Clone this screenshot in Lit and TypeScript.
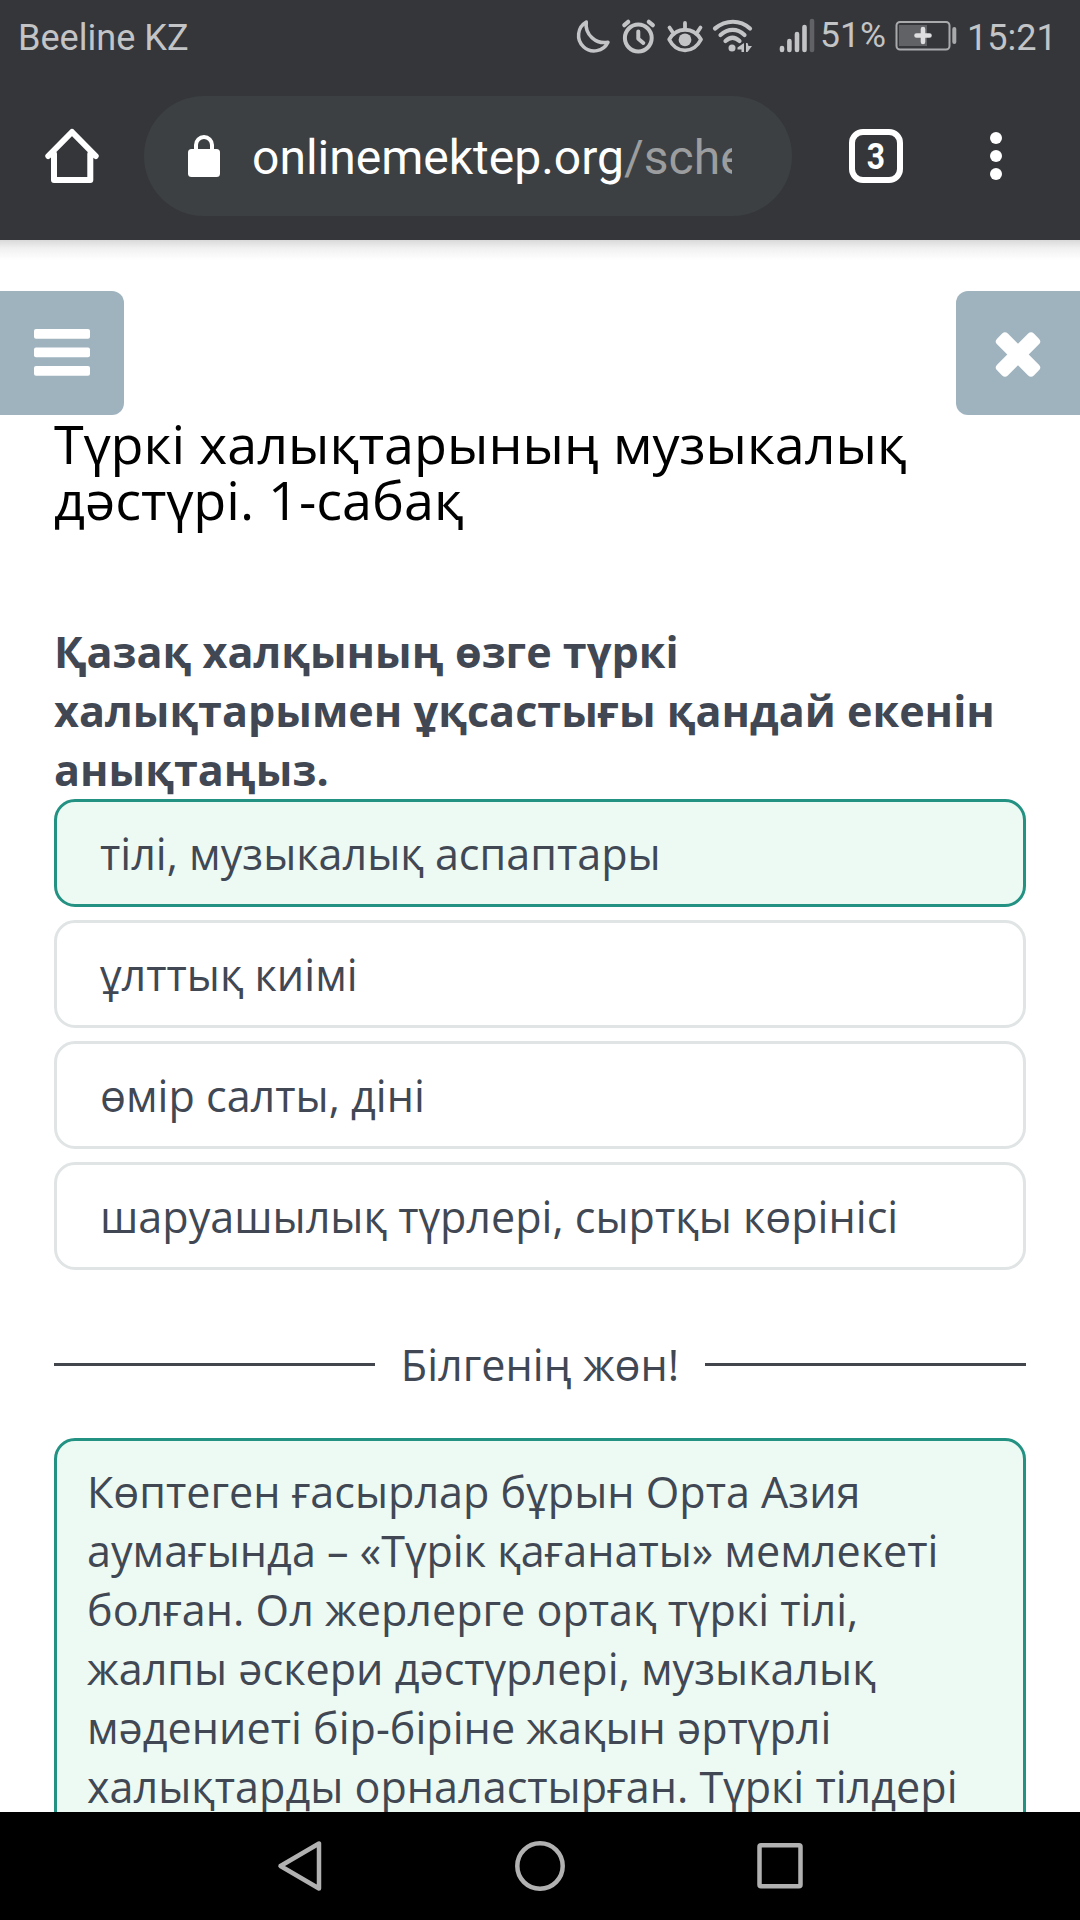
import { LitElement, html, css, svg } from "lit";
import { customElement, property } from "lit/decorators.js";
import { classMap } from "lit/directives/class-map.js";

@customElement("status-bar")
class StatusBar extends LitElement {
  static styles = css`
    :host { display: flex; justify-content: space-between; height: 76px; padding: 0 28px 0 18px; color: #c3c4c6; font: 36.100px/76px Roboto, sans-serif; }
    .carrier { white-space: nowrap; }
    .right { display: flex; }
    .icons { display: block; width: 245px; height: 76px; }
    .battery { display: block; width: 62px; height: 76px; margin: 0 10px 0 10px; }
    .percent { width: 65px; line-height: 70px; font-size: 35.500px; white-space: nowrap; }
    .time { width: 85px; white-space: nowrap; }
  `;
  render() {
    return html`
      <span class="carrier">Beeline KZ</span>
      <div class="right">
        <svg class="icons" viewBox="575 0 245 76" fill="none" stroke="#c3c4c6" stroke-linecap="round" stroke-linejoin="round">
          <path stroke-width="3.5" d="M586.300 22A15.500 15.500 0 1 0 608 42.200C596.500 44.500 584.500 35 586.300 22Z" />
          <g stroke-width="4">
            <circle cx="638.300" cy="38" r="13.400" />
            <path d="M638.300 31.500V38.800L643.300 43" />
            <path stroke-width="4.200" d="M624.300 25.200L628.200 21.800M652.800 25.200L648.800 21.800" />
          </g>
          <g stroke-width="3.8">
            <path d="M669.200 39.500C676.500 26.500 693.500 26.500 701 39.500C693.500 54 676.500 54 669.200 39.500Z" />
            <path d="M685 23V28M669.500 27.500L672.500 32M700.500 27.500L697.500 32" />
            <circle cx="685" cy="39.800" r="6.400" fill="#c3c4c6" stroke="none" />
          </g>
          <g stroke-width="4.200">
            <path d="M715 28.500C726 19.500 740 19.500 750 28.500M720.500 35C728 28.300 737.500 28.300 744.500 35M725.500 41C730 36.800 735 36.800 739.500 41" />
            <circle cx="732" cy="48" r="3.500" fill="#c3c4c6" stroke="none" />
          </g>
          <path fill="#c3c4c6" stroke="none" d="M744 43V52H741.500V49.500H737.500V47.500ZM746 43H747.500L748.500 46L752 46L747.500 52H746Z" />
          <g stroke-width="4.600">
            <path d="M782 48V50M789.400 41V50M797 34V50M804.500 27V50" />
            <path stroke="#616265" d="M812 21V50" />
          </g>
        </svg>
        <span class="percent">51%</span>
        <svg class="battery" viewBox="895 0 62 76">
          <rect x="896.500" y="22" width="53" height="27.500" rx="3.500" fill="none" stroke="#a9aaac" stroke-width="2" />
          <rect x="899" y="25" width="28" height="21" fill="#616265" />
          <path d="M923 29V42M916.500 35.500H929.500" stroke="#dedee0" stroke-width="4.600" stroke-linecap="round" />
          <rect x="952.300" y="27" width="4" height="17" rx="2" fill="#a9aaac" />
        </svg>
        <span class="time">15:21</span>
      </div>
    `;
  }
}

@customElement("address-bar")
class AddressBar extends LitElement {
  static styles = css`
    :host { display: flex; align-items: center; height: 120px; padding: 20px 0 24px; }
    .home { display: block; width: 56px; height: 56px; margin: 0 44px; }
    .pill { box-sizing: border-box; display: flex; align-items: center; width: 648px; height: 120px; padding: 0 60px 0 42px; border-radius: 60px; background: #3d4042; }
    .lock { flex: none; display: block; width: 36px; height: 46px; margin-right: 30px; }
    .url { flex: 1; overflow: hidden; white-space: nowrap; font: 48px/62px Roboto, sans-serif; color: #fff; margin-top: 4px; }
    .path { color: #9b9d9f; }
    .tabs { box-sizing: border-box; width: 54px; height: 54px; margin-left: 57px; border: 6px solid #fff; border-radius: 14px; color: #fff; font: 700 37px/43px Roboto, sans-serif; text-align: center; }
    .count { display: block; transform: scaleX(0.86); }
    .more { display: block; width: 12px; height: 50px; margin-left: 87px; }
  `;
  render() {
    return html`
      <svg class="home" viewBox="44 128 56 56" fill="none" stroke="#fff" stroke-width="6" stroke-linecap="round" stroke-linejoin="round">
        <path d="M48.300 156L72 132L95.700 156M54 154V180H90.300V154" />
      </svg>
      <div class="pill">
        <svg class="lock" viewBox="186 132 36 46">
          <rect x="188" y="148" width="32" height="28" rx="3.500" fill="#fff" />
          <path d="M196 149V144A8 8 0 0 1 212 144V149" fill="none" stroke="#fff" stroke-width="4" />
        </svg>
        <div class="url">onlinemektep.org<span class="path">/schedule</span></div>
      </div>
      <div class="tabs"><span class="count">3</span></div>
      <svg class="more" viewBox="0 0 12 50" fill="#fff">
        ${[7, 25, 43].map((y) => svg`<circle cx="6" cy=${y} r="6" />`)}
      </svg>
    `;
  }
}

@customElement("answer-option")
class AnswerOption extends LitElement {
  @property({ type: Boolean }) selected = false;
  static styles = css`
    :host { display: block; }
    .option { box-sizing: border-box; height: 108px; padding: 21.700px 43px 0; border: 3px solid #e0e4e5; border-radius: 21px; background: #fff; }
    .selected { border-color: #239283; background: #edfaf4; }
  `;
  render() {
    return html`<div class=${classMap({ option: true, selected: this.selected })}><slot></slot></div>`;
  }
}

@customElement("app-root")
class AppRoot extends LitElement {
  static styles = css`
    :host { display: flex; flex-direction: column; width: 1080px; height: 1920px; overflow: hidden; background: #fff; font-family: "Open Sans", "Noto Sans", sans-serif; }
    .chrome { flex: none; height: 240px; background: #35363a; }
    .page { flex: 1; min-height: 0; overflow: hidden; background: linear-gradient(#d9d9d9, #f0f0f0 8px, #fff 20px) no-repeat 0 0 / 100% 20px, #fff; }
    .tools { display: flex; justify-content: space-between; padding-top: 51px; height: 124px; }
    .tool { display: flex; align-items: center; justify-content: center; width: 124px; height: 124px; background: #9fb3bf; }
    .menu { border-radius: 0 12px 12px 0; }
    .close { border-radius: 12px 0 0 12px; }
    .tool svg { display: block; width: 124px; height: 124px; }
    .body { padding: 0 54px; color: #414853; font-size: 43.120px; line-height: 59.060px; }
    .title { margin: 0 0 95px; color: #000; font-weight: 400; font-size: 53.900px; line-height: 56px; }
    .question { margin: 0; font-size: inherit; font-weight: 700; }
    .options { display: flex; flex-direction: column; gap: 13px; }
    .divider { display: flex; align-items: center; gap: 25.500px; height: 59px; margin: 64.600px 0 44px; white-space: nowrap; }
    .line { flex: 1; height: 3px; background: #42464c; }
    .info { padding: 21px 30px; border: 3px solid #239283; border-radius: 21px; background: #edfaf4; white-space: nowrap; }
    .nav { flex: none; box-sizing: border-box; display: flex; justify-content: space-between; align-items: flex-start; height: 108px; padding: 27px 274px 0 276px; background: #000; }
    .nav svg { display: block; width: 54px; height: 54px; }
  `;
  render() {
    const options = ["тілі, музыкалық аспаптары", "ұлттық киімі", "өмір салты, діні", "шаруашылық түрлері, сыртқы көрінісі"];
    const lines = [
      "Көптеген ғасырлар бұрын Орта Азия",
      "аумағында – «Түрік қағанаты» мемлекеті",
      "болған. Ол жерлерге ортақ түркі тілі,",
      "жалпы әскери дәстүрлері, музыкалық",
      "мәдениеті бір-біріне жақын әртүрлі",
      "халықтарды орналастырған. Түркі тілдері",
    ];
    return html`
      <header class="chrome">
        <status-bar></status-bar>
        <address-bar></address-bar>
      </header>
      <main class="page">
        <div class="tools">
          <div class="tool menu">
            <svg viewBox="0 0 124 124" fill="#fff">
              ${[38, 56.5, 75].map((y) => svg`<rect x="34" y=${y} width="56" height="9.800" rx="2" />`)}
            </svg>
          </div>
          <div class="tool close">
            <svg viewBox="0 0 124 124" fill="#fff">
              <g transform="translate(62 63.500) rotate(45)">
                <rect x="-26" y="-7.600" width="52" height="15.200" rx="4" />
                <rect x="-7.600" y="-26" width="15.200" height="52" rx="4" />
              </g>
            </svg>
          </div>
        </div>
        <div class="body">
          <h1 class="title">Түркі халықтарының музыкалық<br />дәстүрі. 1-сабақ</h1>
          <h2 class="question">Қазақ халқының өзге түркі<br />халықтарымен ұқсастығы қандай екенін<br />анықтаңыз.</h2>
          <div class="options">
            ${options.map((text, i) => html`<answer-option ?selected=${i === 0}>${text}</answer-option>`)}
          </div>
          <div class="divider"><span class="line"></span><span>Білгенің жөн!</span><span class="line"></span></div>
          <div class="info">${lines.map((text) => html`<div>${text}</div>`)}</div>
        </div>
      </main>
      <nav class="nav">
        <svg viewBox="0 0 54 54" fill="none" stroke="#b1b1b1" stroke-width="4.500" stroke-linejoin="round"><path d="M43 4.500V49.500L4.500 27Z" /></svg>
        <svg viewBox="0 0 54 54" fill="none" stroke="#b1b1b1" stroke-width="4.500"><circle cx="26" cy="27" r="22.700" /></svg>
        <svg viewBox="0 0 54 54" fill="none" stroke="#b1b1b1" stroke-width="4.500"><rect x="7.500" y="6.300" width="41" height="41" rx="1.500" /></svg>
      </nav>
    `;
  }
}
